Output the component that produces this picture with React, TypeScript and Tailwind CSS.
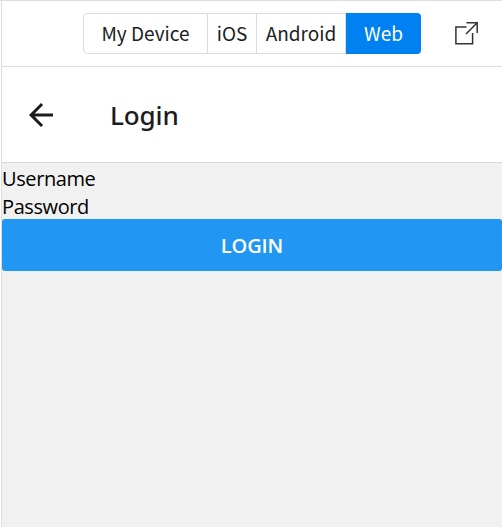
const platforms = [
  { name: 'My Device', box: 'w-[125px] rounded-l border-l' },
  { name: 'iOS', box: 'w-[49px]' },
  { name: 'Android', box: 'w-[89px]' },
];

function PlatformTabs() {
  return (
    <div className="flex h-[41px] text-[19px] leading-[39px] text-[#1b1f23] [font-family:'Noto_Sans_CJK_SC',sans-serif]">
      {platforms.map((p) => (
        <button
          key={p.name}
          className={`flex items-center justify-center whitespace-nowrap border-y border-r border-[#d9dbdf] bg-white pb-[2px] ${p.box}`}
        >
          {p.name}
        </button>
      ))}
      <button className="flex w-[75px] items-center justify-center rounded-r bg-[#0081f1] pb-[2px] text-white">Web</button>
    </div>
  );
}

function OpenIcon() {
  return (
    <svg width="24" height="24" viewBox="0 0 24 24" fill="none" stroke="#333" strokeWidth="1.5">
      <path d="M12.5 4.9H1.9V21.8H18.6V11" />
      <path d="M12 12L23 1M12.5 0.8H23.2V11" />
    </svg>
  );
}

function BackIcon() {
  return (
    <svg width="36" height="36" viewBox="0 0 24 24" fill="#1c1c1e">
      <path d="M20 11H7.8l5.6-5.6L12 4l-8 8 8 8 1.4-1.4L7.8 13H20z" />
    </svg>
  );
}

export default function App() {
  return (
    <div className="flex h-[527px] w-[502px] flex-col overflow-hidden border-t border-[#dcdee2] bg-white pl-px [font-family:'Open_Sans',sans-serif]">
      <div className="flex min-h-0 flex-1 flex-col border-l border-[#dcdee2]">
        <div className="flex h-[66px] shrink-0 items-start border-b border-[#dcdee2] pl-[81px] pt-3">
          <PlatformTabs />
          <button className="ml-[33px] mt-[9px]" aria-label="Open in new window">
            <OpenIcon />
          </button>
        </div>
        <header className="flex h-24 shrink-0 items-center border-b border-[#d8d8d8] pl-[21px]">
          <button aria-label="Back">
            <BackIcon />
          </button>
          <h1 className="ml-[51px] text-[26px] font-medium leading-9 tracking-[-0.1px] text-[#1c1c1e] [font-family:'Noto_Sans',sans-serif]">
            Login
          </h1>
        </header>
        <main className="flex-1 bg-[#f1f1f1] text-[20px] leading-8 text-black">
          <div className="h-7"><span className="tracking-[-0.4px]">Username</span></div>
          <div className="h-7"><span className="tracking-[-0.4px]">Password</span></div>
          <button className="flex h-[52px] w-full items-center justify-center rounded-[3px] bg-[#2196f3] pt-[2px] text-[20px] font-semibold text-white">
            <span className="tracking-[-0.1px]">LOGIN</span>
          </button>
        </main>
      </div>
    </div>
  );
}
